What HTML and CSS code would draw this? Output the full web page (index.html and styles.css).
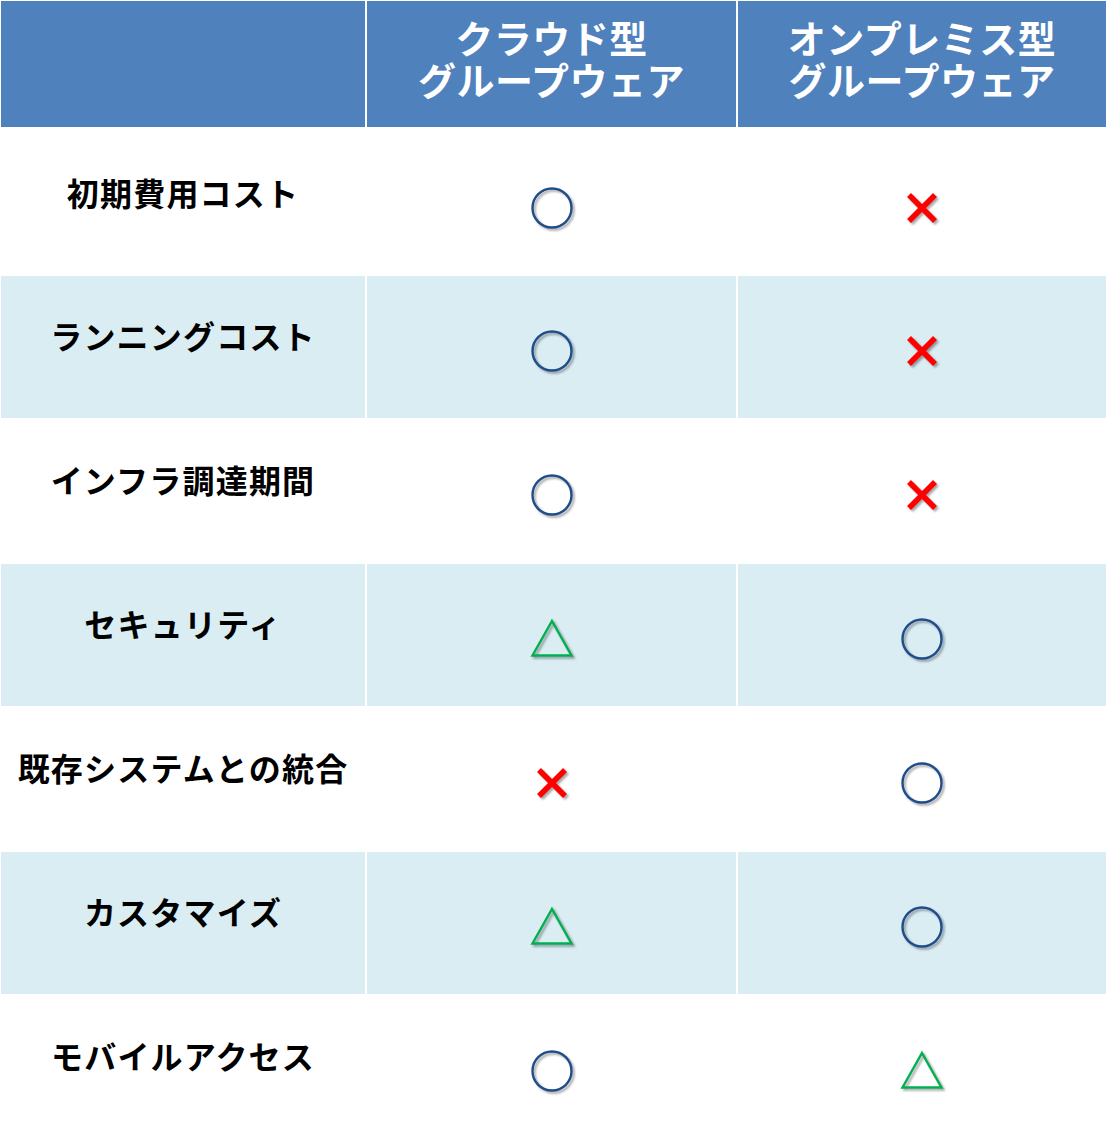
FILE: index.html
```html
<!DOCTYPE html>
<html lang="ja">
<head>
<meta charset="utf-8">
<title>クラウド型とオンプレミス型の比較</title>
<link rel="stylesheet" href="styles.css">
</head>
<body>
<svg class="defs" width="0" height="0" aria-hidden="true">
  <defs>
    <symbol id="maru" viewBox="0 0 44 44"><circle cx="22" cy="22" r="19.5" fill="none" stroke="#1f4c8c" stroke-width="2.4"/></symbol>
    <symbol id="batsu" viewBox="0 0 44 44"><path d="M9 9 L35 35 M35 9 L9 35" stroke="#ff0000" stroke-width="5.5" fill="none"/></symbol>
    <symbol id="sankaku" viewBox="0 0 44 44"><path d="M22 5 L41.5 39.5 L2.5 39.5 Z" fill="none" stroke="#00b050" stroke-width="2.4" stroke-linejoin="miter"/></symbol>
  </defs>
</svg>
<div class="table">
  <div class="cell head"></div>
  <div class="cell head"><span class="hl">クラウド型</span><span class="hl">グループウェア</span></div>
  <div class="cell head"><span class="hl">オンプレミス型</span><span class="hl">グループウェア</span></div>

  <div class="cell label first">初期費用コスト</div>
  <div class="cell mark first"><svg class="icon"><use href="#maru"/></svg></div>
  <div class="cell mark first"><svg class="icon"><use href="#batsu"/></svg></div>

  <div class="cell label alt">ランニングコスト</div>
  <div class="cell mark alt"><svg class="icon"><use href="#maru"/></svg></div>
  <div class="cell mark alt"><svg class="icon"><use href="#batsu"/></svg></div>

  <div class="cell label">インフラ調達期間</div>
  <div class="cell mark"><svg class="icon"><use href="#maru"/></svg></div>
  <div class="cell mark"><svg class="icon"><use href="#batsu"/></svg></div>

  <div class="cell label alt">セキュリティ</div>
  <div class="cell mark alt"><svg class="icon tri"><use href="#sankaku"/></svg></div>
  <div class="cell mark alt"><svg class="icon"><use href="#maru"/></svg></div>

  <div class="cell label">既存システムとの統合</div>
  <div class="cell mark"><svg class="icon"><use href="#batsu"/></svg></div>
  <div class="cell mark"><svg class="icon"><use href="#maru"/></svg></div>

  <div class="cell label alt">カスタマイズ</div>
  <div class="cell mark alt"><svg class="icon tri"><use href="#sankaku"/></svg></div>
  <div class="cell mark alt"><svg class="icon"><use href="#maru"/></svg></div>

  <div class="cell label">モバイルアクセス</div>
  <div class="cell mark"><svg class="icon"><use href="#maru"/></svg></div>
  <div class="cell mark"><svg class="icon tri"><use href="#sankaku"/></svg></div>
</div>
</body>
</html>
```

FILE: styles.css
```css
html, body {
  margin: 0;
  padding: 0;
  background: #ffffff;
}
body {
  font-family: "Noto Sans CJK JP", "Noto Sans", sans-serif;
  width: 1106px;
  height: 1143px;
  overflow: hidden;
}
.defs {
  position: absolute;
  width: 0;
  height: 0;
}
.table {
  display: grid;
  grid-template-columns: 364px 369px 368px;
  grid-template-rows: 126px 145px repeat(6, 142px);
  column-gap: 2px;
  row-gap: 2px;
  padding: 1px 0 0 1px;
}
.cell {
  box-sizing: border-box;
}
.head {
  background: #4f81bd;
  color: #ffffff;
  font-weight: 700;
  font-size: 38px;
  line-height: 42px;
  text-align: center;
  display: flex;
  flex-direction: column;
  align-items: center;
  justify-content: center;
  padding-bottom: 13px;
  letter-spacing: 0.5px;
}
.hl {
  display: block;
  height: 42px;
  white-space: nowrap;
}
.alt {
  background: #daedf3;
}
.label {
  font-weight: 700;
  font-size: 32px;
  line-height: 40px;
  color: #000000;
  text-align: center;
  padding-top: 39px;
  letter-spacing: 1.2px;
  white-space: nowrap;
}
.label.first {
  padding-top: 43px;
}
.mark {
  display: flex;
  justify-content: center;
  align-items: flex-start;
  padding-top: 53px;
}
.mark.first {
  padding-top: 57px;
}
.icon {
  width: 44px;
  height: 44px;
  display: block;
  filter: drop-shadow(2px 2px 1.2px rgba(0, 0, 0, 0.35));
}
.icon.tri {
  margin-top: -1px;
}
```
